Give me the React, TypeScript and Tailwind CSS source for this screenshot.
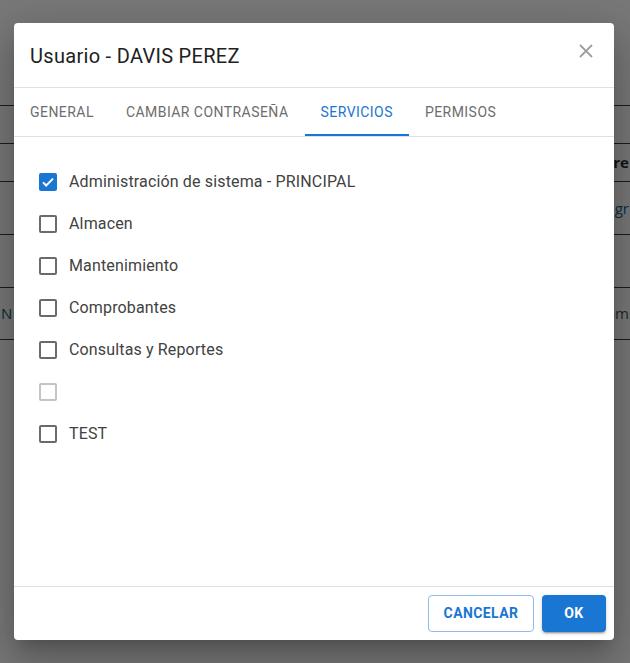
import React from "react";

const items = [
  { label: "Administración de sistema - PRINCIPAL", checked: true },
  { label: "Almacen" },
  { label: "Mantenimiento" },
  { label: "Comprobantes" },
  { label: "Consultas y Reportes" },
  { label: "", disabled: true },
  { label: "TEST" },
];

function Box({ checked, disabled }: { checked?: boolean; disabled?: boolean }) {
  if (checked) {
    return (
      <span className="w-[18px] h-[18px] rounded-[2px] bg-[#1976d2] flex items-center justify-center shrink-0">
        <svg width="16" height="16" viewBox="0 0 24 24">
          <path d="M4.5 12.5l4.8 4.8L19.5 7" fill="none" stroke="#fff" strokeWidth="3" />
        </svg>
      </span>
    );
  }
  return (
    <span
      className={
        "w-[18px] h-[18px] rounded-[2px] border-2 shrink-0 " +
        (disabled ? "border-[#c4c4c4]" : "border-[#6b6b6b]")
      }
    />
  );
}

export default function App() {
  return (
    <div
      className="relative w-full h-[663px] overflow-hidden bg-[#787878]"
      style={{ fontFamily: "Roboto, 'Liberation Sans', sans-serif" }}
    >
      {/* background table (dimmed) */}
      <div className="pt-[105px] flex flex-col" style={{ fontFamily: "'Open Sans', sans-serif" }}>
        <div className="h-[38px] border-t border-[#1c1c1c]" />
        <div className="h-[38px] border-t border-[#1c1c1c] flex items-center justify-end pr-[1px]">
          <span className="text-[15px] font-bold text-[#141414] leading-none">re</span>
        </div>
        <div className="h-[53px] border-t border-[#1c1c1c] flex items-center justify-end pr-[1px]">
          <span className="text-[15px] text-[#0e2d44] leading-none">gr</span>
        </div>
        <div className="h-[53px] border-t border-[#1c1c1c]" />
        <div className="h-[53px] border-t border-b border-[#1c1c1c] flex items-center justify-between">
          <span className="text-[15px] text-[#0c2a3a] leading-none pl-[1px]">N</span>
          <span className="text-[15px] text-[#2a2a1a] leading-none pr-[1px]">om</span>
        </div>
      </div>

      {/* dialog */}
      <div className="absolute left-[14px] top-[23px] w-[600px] h-[617px] bg-white rounded-[4px] shadow-[0_11px_15px_-7px_rgba(0,0,0,0.2),0_24px_38px_3px_rgba(0,0,0,0.14),0_9px_46px_8px_rgba(0,0,0,0.12)] flex flex-col">
        <div className="h-[65px] shrink-0 flex items-center justify-between pl-4 pr-[21px] border-b border-[#e0e0e0]">
          <span className="text-[20px] font-normal text-[#212121] tracking-[0.015em] pt-[1px]">Usuario - DAVIS PEREZ</span>
          <svg width="14" height="14" viewBox="0 0 14 14" className="mt-[-8px]">
            <path d="M1 1L13 13M13 1L1 13" stroke="#9e9e9e" strokeWidth="1.8" />
          </svg>
        </div>
        <div className="h-[49px] shrink-0 flex border-b border-[#e0e0e0]">
          {["GENERAL", "CAMBIAR CONTRASEÑA", "SERVICIOS", "PERMISOS"].map((t) => {
            const active = t === "SERVICIOS";
            return (
              <div
                key={t}
                className={
                  "px-4 flex items-center pt-[2px] text-[14px] font-normal tracking-[0.45px] border-b-2 " +
                  (active ? "text-[#1976d2] border-[#1976d2]" : "text-[#6d6d6d] border-transparent")
                }
              >
                {t}
              </div>
            );
          })}
        </div>
        <div className="flex-1 flex flex-col pt-[24px] pl-[25px]">
          {items.map((it, i) => (
            <div key={i} className="h-[42px] flex items-center gap-3">
              <Box checked={it.checked} disabled={it.disabled} />
              <span className="text-[16px] text-[#424242] tracking-[0.15px]">{it.label}</span>
            </div>
          ))}
        </div>
        <div className="h-[54px] shrink-0 border-t border-[#e0e0e0] flex items-center justify-end gap-2 pr-2">
          <button className="h-[37px] w-[106px] rounded-[4px] border border-[#8fbbe6] text-[#1976d2] text-[14px] font-bold tracking-[0.4px]">
            CANCELAR
          </button>
          <button className="h-[37px] w-[64px] rounded-[4px] bg-[#1976d2] text-white text-[14px] font-bold tracking-[0.4px] shadow-[0_3px_1px_-2px_rgba(0,0,0,0.2),0_2px_2px_0_rgba(0,0,0,0.14),0_1px_5px_0_rgba(0,0,0,0.12)]">
            OK
          </button>
        </div>
      </div>
    </div>
  );
}
